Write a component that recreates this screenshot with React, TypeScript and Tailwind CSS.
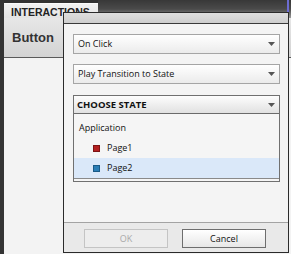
import React from "react";

function Arrow() {
  return (
    <svg width="7" height="4" viewBox="0 0 7 4" className="shrink-0">
      <polygon points="0,0 7,0 3.5,4" fill="#555" />
    </svg>
  );
}

function Dropdown({ label }: { label: string }) {
  return (
    <div className="h-[20px] w-[207px] border border-[#a5a5a5] bg-gradient-to-b from-[#ffffff] to-[#ebebeb] flex items-center justify-between pl-[4px] pr-[4px] font-['Open_Sans',sans-serif] text-[9px] leading-[12px] text-[#111]">
      <span>{label}</span>
      <Arrow />
    </div>
  );
}

export default function App() {
  return (
    <div className="relative w-[291px] h-[254px] overflow-hidden flex bg-[#333333] font-['Liberation_Sans',Arial,sans-serif] text-[#1a1a1a]">
      <div className="w-[4px] shrink-0 bg-[#343434]" />
      <div className="flex-1 flex flex-col">
        <div className="h-[18px] flex shrink-0">
          <div className="mt-[3px] w-[94px] bg-gradient-to-b from-[#f2f2f2] to-[#e3e3e3] border-t border-[#fbfbfb] pl-[7px] pt-[2px] text-[10.5px] font-bold leading-[12px] text-[#222]">
            INTERACTIONS
          </div>
          <div className="flex-1 bg-gradient-to-b from-[#383838] via-[#4a4a4a] to-[#9c9c9c] flex justify-end">
            <div className="w-[2px] mr-[2px] bg-[#6c6cd2]" />
          </div>
        </div>
        <div className="h-[40px] shrink-0 bg-gradient-to-b from-[#e7e7e7] to-[#d3d3d3] border-b border-[#5a5a5a] pl-[8px] pt-[12px] text-[13px] font-bold leading-[15px] text-[#333]">
          Button
        </div>
        <div className="flex-1 bg-[#f3f3f3]" />
      </div>

      <div className="absolute left-[63px] top-[12px] w-[226px] h-[241px] border border-[#2b2b2b] bg-[#f4f4f4] flex flex-col font-['Open_Sans',sans-serif]">
        <div className="h-[11px] shrink-0 bg-gradient-to-b from-[#dedede] to-[#cecece] border-b border-[#3a3a3a]" />
        <div className="flex-1 flex flex-col pl-[9px] pr-[7px] pt-[10px]">
          <Dropdown label="On Click" />
          <div className="mt-[10px]">
            <Dropdown label="Play Transition to State" />
          </div>
          <div className="mt-[11px] h-[87px] w-[207px] border border-[#707070] bg-[#f5f5f5] flex flex-col">
            <div className="h-[18px] shrink-0 border-b border-[#6a6a6a] bg-gradient-to-b from-[#fdfdfd] to-[#e1e1e1] flex items-center justify-between pl-[3px] pr-[4px] text-[9.5px] font-bold leading-[12px] text-[#111]">
              <span>CHOOSE STATE</span>
              <Arrow />
            </div>
            <div className="h-[65px] shrink-0 border-b border-[#8a8a8a] pt-[4px] flex flex-col text-[9px] leading-[12px] text-[#111]">
              <div className="h-[20px] flex items-center pl-[5px]">Application</div>
              <div className="h-[20px] flex items-center pl-[19px] gap-[7px]">
                <span className="w-[7px] h-[7px] bg-[#b42020] border border-[#7d1414]" />
                <span>Page1</span>
              </div>
              <div className="h-[20px] flex items-center pl-[19px] gap-[7px] bg-[#dae8f9]">
                <span className="w-[7px] h-[7px] bg-[#2a7db5] border border-[#1a5a86]" />
                <span>Page2</span>
              </div>
            </div>
          </div>
        </div>
        <div className="h-[30px] shrink-0 border-t border-[#a3a3a3] bg-[#e9e9e9] flex items-start pl-[20px] pt-[6px] gap-[14px]">
          <div className="h-[19px] w-[84px] border border-[#c4c4c4] bg-[#ededed] flex items-center justify-center text-[9px] leading-[12px] text-[#a9a9a9]">
            OK
          </div>
          <div className="h-[19px] w-[84px] border border-[#6e6e6e] bg-gradient-to-b from-[#ffffff] to-[#e7e7e7] flex items-center justify-center text-[9px] leading-[12px] text-[#111]">
            Cancel
          </div>
        </div>
      </div>
    </div>
  );
}
